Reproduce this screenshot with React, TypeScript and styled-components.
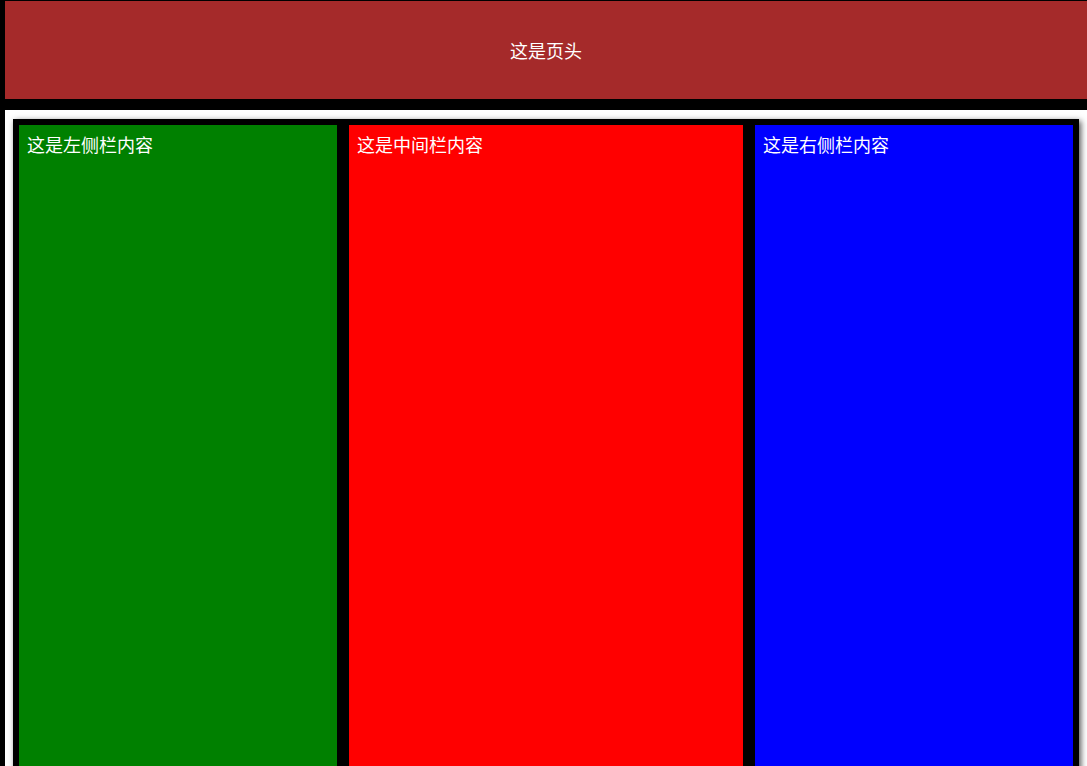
import styled, { createGlobalStyle } from "styled-components";

const GlobalStyle = createGlobalStyle`
  html, body {
    margin: 0;
    padding: 0;
    background: #000;
    overflow: hidden;
  }
  body {
    font-family: "Noto Sans CJK SC", "Noto Sans", sans-serif;
  }
`;

const Page = styled.div`
  padding: 1px 0 0 5px;
`;

const Header = styled.header`
  height: 98px;
  background: #a52a2a;
  color: #fff;
  font-size: 18px;
  display: flex;
  align-items: center;
  justify-content: center;
`;

const Main = styled.main`
  margin-top: 11px;
  background: #fff;
  padding: 9px 8px;
`;

const Columns = styled.div`
  display: grid;
  grid-template-columns: 318px 394px 318px;
  gap: 12px;
  padding: 6px;
  background: #000;
  box-shadow: 2px 2px 6px #555;
`;

const Column = styled.section<{ $bg: string }>`
  background: ${(p) => p.$bg};
  color: #fff;
  font-size: 18px;
  padding: 6px 8px 8px;
  min-height: 680px;
`;

const columns = [
  { bg: "#008000", text: "这是左侧栏内容" },
  { bg: "#ff0000", text: "这是中间栏内容" },
  { bg: "#0000ff", text: "这是右侧栏内容" },
];

export default function App() {
  return (
    <>
      <GlobalStyle />
      <Page>
        <Header>这是页头</Header>
        <Main>
          <Columns>
            {columns.map((c) => (
              <Column key={c.text} $bg={c.bg}>
                {c.text}
              </Column>
            ))}
          </Columns>
        </Main>
      </Page>
    </>
  );
}
